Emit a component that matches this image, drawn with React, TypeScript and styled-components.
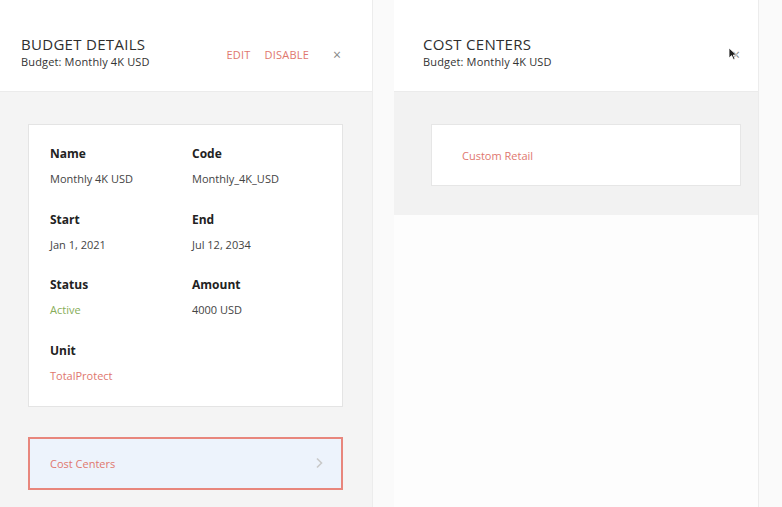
import React from "react";
import styled, { createGlobalStyle } from "styled-components";

const Global = createGlobalStyle`
  html, body { margin: 0; padding: 0; background: #fafafa; }
  body { font-family: "Open Sans", "Noto Sans", sans-serif; color: #333; }
  #root { height: 507px; overflow: hidden; }
`;

const Page = styled.div`
  display: flex;
  gap: 21px;
  height: 507px;
  background: #fafafa;
`;

const Panel = styled.section<{ $w: number; $fill?: boolean }>`
  width: ${(p) => p.$w}px;
  display: flex;
  flex-direction: column;
  background: ${(p) => (p.$fill ? "#f4f4f4" : "#fdfdfd")};
  border-right: 1px solid #ececec;
`;

const Header = styled.header<{ $pl: number; $pr: number }>`
  height: 92px;
  box-sizing: border-box;
  padding: 0 ${(p) => p.$pr}px 0 ${(p) => p.$pl}px;
  background: #fff;
  border-bottom: 1px solid #ebebeb;
  display: flex;
  align-items: center;
  justify-content: space-between;
  position: relative;
`;

const TitleBlock = styled.div`
  display: flex;
  flex-direction: column;
  padding-top: 12px;
`;

const Title = styled.h1`
  margin: 0;
  font-size: 15px;
  font-weight: 400;
  line-height: 20px;
  color: #2e2e2e;
  letter-spacing: 0.3px;
`;

const Subtitle = styled.div`
  font-size: 11px;
  line-height: 16px;
  color: #333;
  letter-spacing: 0.15px;
`;

const Actions = styled.div`
  display: flex;
  align-items: center;
  gap: 14px;
  padding-top: 18px;
`;

const ActionLink = styled.span`
  font-size: 11px;
  color: #e0776e;
  letter-spacing: 0.2px;
`;

const Close = styled.span`
  font-size: 14px;
  color: #888;
  margin-left: 10px;
  line-height: 1;
`;

const Body = styled.div<{ $pad: string; $bg: string }>`
  padding: ${(p) => p.$pad};
  background: ${(p) => p.$bg};
  display: flex;
  flex-direction: column;
`;

const Card = styled.div`
  background: #fff;
  border: 1px solid #e4e4e4;
  box-sizing: border-box;
  padding: 21px 21px 22px;
  display: grid;
  grid-template-columns: 142px 1fr;
  row-gap: 24.5px;
`;

const Field = styled.div`
  display: flex;
  flex-direction: column;
  gap: 9px;
`;

const Label = styled.div`
  font-size: 12px;
  font-weight: 700;
  line-height: 16px;
  color: #222;
`;

const Value = styled.div<{ $tone?: "green" | "red" }>`
  font-size: 11px;
  line-height: 16px;
  color: ${(p) => (p.$tone === "green" ? "#86ad58" : p.$tone === "red" ? "#e0776e" : "#444")};
`;

const NavRow = styled.div`
  margin-top: 30px;
  height: 53px;
  box-sizing: border-box;
  border: 2px solid #e8867c;
  background: #edf3fc;
  display: flex;
  align-items: center;
  justify-content: space-between;
  padding: 0 18px 0 20px;
`;

const NavText = styled.span`
  font-size: 11px;
  color: #e0776e;
`;

const ListCard = styled.div`
  background: #fff;
  border: 1px solid #e6e6e6;
  height: 62px;
  box-sizing: border-box;
  display: flex;
  align-items: center;
  padding: 0 30px;
`;

const Cursor = styled.svg`
  position: absolute;
  right: 20px;
  top: 47px;
`;

const Filler = styled.div`
  flex: 1;
  background: #fdfdfd;
`;

export default function App() {
  return (
    <>
      <Global />
      <Page>
        <Panel $w={372} $fill>
          <Header $pl={21} $pr={31}>
            <TitleBlock>
              <Title>BUDGET DETAILS</Title>
              <Subtitle>Budget: Monthly 4K USD</Subtitle>
            </TitleBlock>
            <Actions>
              <ActionLink>EDIT</ActionLink>
              <ActionLink>DISABLE</ActionLink>
              <Close>×</Close>
            </Actions>
          </Header>
          <Body $pad="32px 29px 0 28px" $bg="#f4f4f4">
            <Card>
              <Field>
                <Label>Name</Label>
                <Value>Monthly 4K USD</Value>
              </Field>
              <Field>
                <Label>Code</Label>
                <Value>Monthly_4K_USD</Value>
              </Field>
              <Field>
                <Label>Start</Label>
                <Value>Jan 1, 2021</Value>
              </Field>
              <Field>
                <Label>End</Label>
                <Value>Jul 12, 2034</Value>
              </Field>
              <Field>
                <Label>Status</Label>
                <Value $tone="green">Active</Value>
              </Field>
              <Field>
                <Label>Amount</Label>
                <Value>4000 USD</Value>
              </Field>
              <Field>
                <Label>Unit</Label>
                <Value $tone="red">TotalProtect</Value>
              </Field>
            </Card>
            <NavRow>
              <NavText>Cost Centers</NavText>
              <svg width="8" height="12" viewBox="0 0 8 12">
                <path d="M2 1.5 L6.5 6 L2 10.5" fill="none" stroke="#c9c9c9" strokeWidth="1.6" />
              </svg>
            </NavRow>
          </Body>
        </Panel>
        <Panel $w={364}>
          <Header $pl={29} $pr={18}>
            <TitleBlock>
              <Title>COST CENTERS</Title>
              <Subtitle>Budget: Monthly 4K USD</Subtitle>
            </TitleBlock>
            <Actions>
              <Close>×</Close>
            </Actions>
            <Cursor width="10" height="14" viewBox="0 0 10 14">
              <path d="M1 1 L1 11 L3.6 8.6 L5.4 12.6 L7 11.9 L5.3 8 L8.6 8 Z" fill="#222" stroke="#fff" strokeWidth="0.8" />
            </Cursor>
          </Header>
          <Body $pad="32px 17px 29px 37px" $bg="#f2f2f2">
            <ListCard>
              <NavText>Custom Retail</NavText>
            </ListCard>
          </Body>
          <Filler />
        </Panel>
      </Page>
    </>
  );
}
